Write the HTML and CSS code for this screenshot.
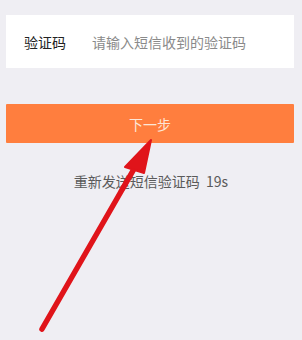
FILE: index.html
```html
<!DOCTYPE html>
<html lang="zh-CN">
<head>
  <meta charset="UTF-8">
  <meta name="viewport" content="width=device-width, initial-scale=1">
  <title>验证码</title>
  <link rel="stylesheet" href="styles.css">
</head>
<body>
  <div class="page">
    <div class="form-card">
      <label class="field-label" for="code">验证码</label>
      <input id="code" class="field-input" type="text" placeholder="请输入短信收到的验证码">
    </div>

    <button type="button" class="next-btn">下一步</button>

    <p class="resend">重新发送短信验证码&nbsp; 19s</p>

    <!-- red annotation arrow pointing at the button -->
    <svg class="annotation" width="302" height="340" viewBox="0 0 302 340" aria-hidden="true">
      <line x1="42" y1="329" x2="138" y2="162" stroke="#e0141a" stroke-width="5.5" stroke-linecap="round"/>
      <polygon points="151,140 125,167 144,173" fill="#e0141a" stroke="#e0141a" stroke-width="2" stroke-linejoin="round"/>
    </svg>
  </div>
</body>
</html>
```

FILE: styles.css
```css
/* Reset and base */
* {
  box-sizing: border-box;
}
body {
  margin: 0;
  background: #efeef3;
  font-family: "Noto Sans CJK SC", "Noto Sans", sans-serif;
  color: #333;
}
.page {
  position: relative;
  width: 302px;
  height: 340px;
  padding-top: 15px;
  overflow: hidden;
}
.form-card {
  display: flex;
  align-items: center;
  height: 53px;
  margin: 0 8px 0 6px;
  padding-left: 18px;
  background: #fff;
}
.field-label {
  width: 68px;
  font-size: 14px;
  color: #222;
}
.field-input {
  flex: 1;
  min-width: 0;
  border: none;
  outline: none;
  padding: 0;
  background: transparent;
  font-family: inherit;
  font-size: 14px;
  color: #333;
}
.field-input::placeholder {
  color: #8a8a8a;
}
.next-btn {
  display: block;
  width: 288px;
  height: 39px;
  margin: 36px 0 0 6px;
  border: none;
  border-radius: 1px;
  background: #ff7e3e;
  color: #fde6d6;
  font-family: inherit;
  font-size: 14px;
  cursor: pointer;
}
.resend {
  margin: 28px 0 0;
  line-height: 20px;
  text-align: center;
  font-size: 14px;
  color: #5a5a5a;
}
.annotation {
  position: absolute;
  left: 0;
  top: 0;
  pointer-events: none;
}
```
